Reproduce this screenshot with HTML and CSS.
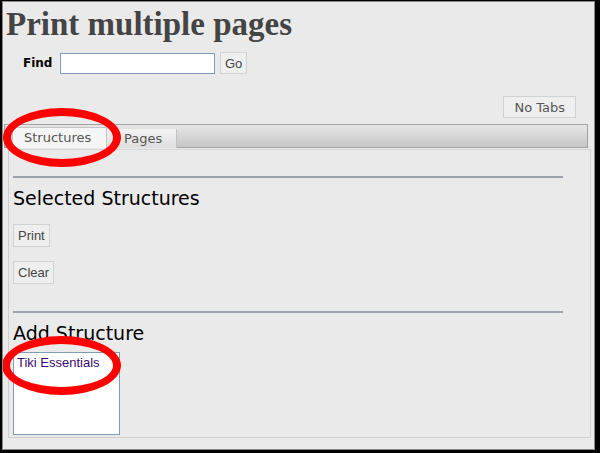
FILE: index.html
```html
<!DOCTYPE html>
<html>
<head>
<meta charset="utf-8">
<link rel="stylesheet" href="styles.css">
</head>
<body>
<div class="window">
  <h1 class="title">Print multiple pages</h1>
  <form class="find-row">
    <label class="find-label">Find</label>
    <input class="find-input" type="text">
    <button class="btn" type="button">Go</button>
  </form>
  <div class="notabs-row">
    <button class="btn btn-notabs" type="button">No Tabs</button>
  </div>
  <div class="tabbar">
    <div class="tab tab-active">Structures</div>
    <div class="tab">Pages</div>
    <div class="ring ring-tab"></div>
  </div>
  <div class="panel">
    <hr class="rule">
    <h2 class="section-title">Selected Structures</h2>
    <div class="btn-row"><button class="btn" type="button">Print</button></div>
    <div class="btn-row"><button class="btn" type="button">Clear</button></div>
    <hr class="rule rule-second">
    <h2 class="section-title">Add Structure</h2>
    <div class="listbox">
      <div class="list-item">Tiki Essentials</div>
      <div class="ring ring-list"></div>
    </div>
  </div>
</div>
</body>
</html>
```

FILE: styles.css
```css
html, body {
  margin: 0;
  padding: 0;
  background: #000;
}
body {
  padding: 1px 5px 3px 2px;
  width: 600px;
  height: 453px;
  box-sizing: border-box;
}
.window {
  border: 1px solid #8a8a8a;
  background: #eaeaea;
  height: 449px;
  box-sizing: border-box;
  position: relative;
  overflow: hidden;
}
.title {
  font-family: "Liberation Serif", serif;
  font-weight: bold;
  font-size: 33px;
  line-height: 36px;
  color: #444;
  margin: 4px 0 0 3px;
}
.find-row {
  display: flex;
  align-items: center;
  margin: 10px 0 0 20px;
}
.find-label {
  font-family: "DejaVu Sans", sans-serif;
  font-weight: bold;
  font-size: 12px;
  color: #000;
  width: 37px;
}
.find-input {
  width: 155px;
  height: 21px;
  box-sizing: border-box;
  border: 1px solid #7f9db9;
  background: #fff;
  margin: 0 5px 0 0;
  padding: 0;
}
.btn {
  font-family: "Liberation Sans", sans-serif;
  font-size: 13px;
  color: #444;
  background: #efefef;
  border: 1px solid #d2d2d2;
  height: 22px;
  padding: 0 4px;
  margin: 0;
  border-radius: 0;
}
.notabs-row {
  display: flex;
  justify-content: flex-end;
  margin: 22px 18px 0 0;
}
.btn-notabs {
  font-family: "DejaVu Sans", sans-serif;
  font-size: 13px;
  color: #555;
  padding: 0 10px;
  height: 22px;
}
.tabbar {
  position: relative;
  margin: 6px 6px 0 1px;
  height: 24px;
  box-sizing: border-box;
  border: 1px solid #a3a3a3;
  background: linear-gradient(#e6e6e6, #c6c6c6);
  display: flex;
  align-items: flex-end;
  padding-left: 7px;
}
.tab {
  font-family: "DejaVu Sans", sans-serif;
  font-size: 13px;
  color: #555;
  height: 19px;
  line-height: 19px;
  padding: 0 14px 0 17px;
  background: linear-gradient(#f4f4f4, #dedede);
  border-right: 1px solid #c2c2c2;
  margin-bottom: -1px;
}
.tab-active {
  background: #f5f5f5;
  padding: 0 12px 0 11px;
  border: 1px solid #c6c6c6;
  border-bottom: none;
  height: 20px;
  width: 70px;
}
.panel {
  margin: 1px 3px 0 5px;
  height: 289px;
  box-sizing: border-box;
  border: 1px solid #cfcfcf;
  border-top-color: #d6d6d6;
  padding: 0 27px 0 4px;
}
.rule {
  border: none;
  border-top: 2px solid #9ca3ab;
  margin: 26px 0 0 0;
  height: 0;
}
.rule-second {
  margin-top: 27px;
}
.section-title {
  font-family: "DejaVu Sans", sans-serif;
  font-weight: normal;
  font-size: 19px;
  line-height: 24px;
  color: #000;
  margin: 8px 0 0 0;
}
.btn-row {
  margin-top: 14px;
}
.btn-row + .btn-row {
  margin-top: 14px;
}
.btn-row .btn {
  height: 23px;
}
.listbox {
  position: relative;
  width: 107px;
  height: 83px;
  box-sizing: border-box;
  background: #fff;
  border: 1px solid #7f9db9;
  margin-top: 7px;
}
.list-item {
  font-family: "Liberation Sans", sans-serif;
  font-size: 13px;
  color: #3c0a6e;
  padding: 2px 0 0 3px;
}
.ring {
  position: absolute;
  border: 8px solid #f00;
  border-radius: 50%;
  box-sizing: border-box;
  pointer-events: none;
}
.ring-tab {
  left: -2px;
  top: -17px;
  width: 118px;
  height: 59px;
}
.ring-list {
  left: -12px;
  top: -17px;
  width: 119px;
  height: 59px;
}
```
